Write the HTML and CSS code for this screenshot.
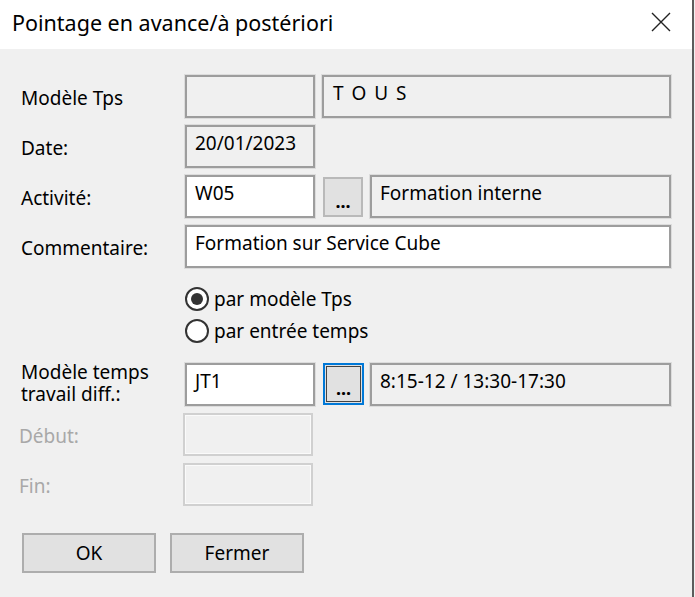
FILE: index.html
```html
<!DOCTYPE html>
<html lang="fr">
<head>
<meta charset="utf-8">
<title>Pointage en avance/à postériori</title>
<link rel="stylesheet" href="styles.css">
</head>
<body>
<div class="window">
  <div class="titlebar">
    <span class="title">Pointage en avance/à postériori</span>
    <svg class="close" width="22" height="22" viewBox="0 0 22 22"><path d="M2 2 L20 20 M20 2 L2 20" stroke="#222" stroke-width="1.4" fill="none"/></svg>
  </div>
  <div class="content">
    <div class="row">
      <div class="label">Modèle Tps</div>
      <div class="fields">
        <div class="box ro w130"></div>
        <div class="box ro w349 gap7 spaced">T O U S</div>
      </div>
    </div>
    <div class="row">
      <div class="label">Date:</div>
      <div class="fields">
        <div class="box ro w130">20/01/2023</div>
      </div>
    </div>
    <div class="row">
      <div class="label">Activité:</div>
      <div class="fields">
        <div class="box wh w130">W05</div>
        <div class="dots">...</div>
        <div class="box ro w301 gap7">Formation interne</div>
      </div>
    </div>
    <div class="row">
      <div class="label">Commentaire:</div>
      <div class="fields">
        <div class="box wh w486">Formation sur Service Cube</div>
      </div>
    </div>
    <div class="radios">
      <div class="radio"><span class="circle checked"></span><span>par modèle Tps</span></div>
      <div class="radio"><span class="circle"></span><span>par entrée temps</span></div>
    </div>
    <div class="row">
      <div class="label two"><div class="ln">Modèle temps</div><div class="ln">travail diff.:</div></div>
      <div class="fields">
        <div class="box wh w130">JT1</div>
        <div class="dots focus">...</div>
        <div class="box ro w301 gap6">8:15-12 / 13:30-17:30</div>
      </div>
    </div>
    <div class="row">
      <div class="label disabled">Début:</div>
      <div class="fields">
        <div class="box dis w130"></div>
      </div>
    </div>
    <div class="row">
      <div class="label disabled">Fin:</div>
      <div class="fields">
        <div class="box dis w130"></div>
      </div>
    </div>
    <div class="buttons">
      <div class="btn">OK</div>
      <div class="btn">Fermer</div>
    </div>
  </div>
</div>
</body>
</html>
```
FILE: styles.css
```css
html, body {
  margin: 0;
  padding: 0;
  background: #f0f0f0;
}
body {
  width: 695px;
  height: 597px;
  overflow: hidden;
  font-family: "Noto Sans", "Open Sans", sans-serif;
  font-size: 19px;
  color: #000;
}
.window {
  width: 692px;
  height: 597px;
  border-right: 2px solid #5c5c5c;
  background: #f0f0f0;
}
.titlebar {
  height: 49px;
  background: #fff;
  display: flex;
  align-items: center;
  justify-content: space-between;
  padding: 0 20px 0 12px;
  box-sizing: border-box;
}
.title {
  font-size: 21.5px;
  color: #000;
  margin-top: -5px;
}
.close {
  margin-top: -6px;
}
.content {
  display: flex;
  flex-direction: column;
  padding: 26px 0 0 21px;
}
.row {
  display: flex;
  height: 43px;
  margin-bottom: 7px;
}
.label {
  width: 164px;
  padding-top: 11px;
  line-height: 24px;
  box-sizing: border-box;
  flex-shrink: 0;
}
.label.two {
  padding-top: 0;
  margin-top: -2px;
}
.label.two .ln {
  height: 22px;
  line-height: 22px;
  white-space: nowrap;
}
.label.disabled {
  color: #a8a8a8;
  margin-left: -2px;
}
.fields {
  display: flex;
  align-items: flex-start;
}
.box {
  height: 43px;
  box-sizing: border-box;
  border: 2px solid #9d9d9d;
  box-shadow: 0 0 0 1px #dcdcdc;
  padding: 4px 8px 0 8px;
  line-height: 24px;
  white-space: nowrap;
  overflow: hidden;
}
.box.ro { background: #f0f0f0; }
.box.wh { background: #fff; }
.box.dis {
  background: #f0f0f0;
  border-color: #d0d0d0;
  box-shadow: inset 0 0 0 1px #fafafa;
}
.w130 { width: 130px; }
.w349 { width: 349px; }
.w301 { width: 301px; }
.w486 { width: 486px; }
.gap7 { margin-left: 7px; }
.gap6 { margin-left: 6px; }
.spaced {
  letter-spacing: 1.5px;
  padding-left: 9px;
}
.dots {
  width: 40px;
  height: 40px;
  margin-left: 8px;
  margin-top: 2px;
  box-sizing: border-box;
  background: #e1e1e1;
  border: 2px solid #b9b9b9;
  display: flex;
  align-items: flex-end;
  justify-content: center;
  font-size: 18px;
  font-weight: bold;
  line-height: 28px;
}
.dots.focus {
  width: 41px;
  height: 42px;
  margin-top: 0;
  border: 2px solid #0078d7;
  box-shadow: inset 0 0 0 1px #e1e1e1, inset 0 0 0 2px #444;
  line-height: 30px;
}
.radios {
  margin: 8px 0 16px 164px;
}
.radio {
  display: flex;
  align-items: center;
  height: 32px;
  line-height: 32px;
}
.circle {
  width: 24px;
  height: 24px;
  box-sizing: border-box;
  border: 2px solid #333;
  border-radius: 50%;
  background: #fff;
  margin-right: 5px;
  display: flex;
  align-items: center;
  justify-content: center;
}
.circle.checked::after {
  content: "";
  width: 12px;
  height: 12px;
  border-radius: 50%;
  background: #333;
}
.buttons {
  display: flex;
  gap: 14px;
  margin: 20px 0 0 1px;
}
.btn {
  width: 134px;
  height: 40px;
  box-sizing: border-box;
  background: #e1e1e1;
  border: 2px solid #adadad;
  display: flex;
  align-items: center;
  justify-content: center;
  line-height: 24px;
}
```
